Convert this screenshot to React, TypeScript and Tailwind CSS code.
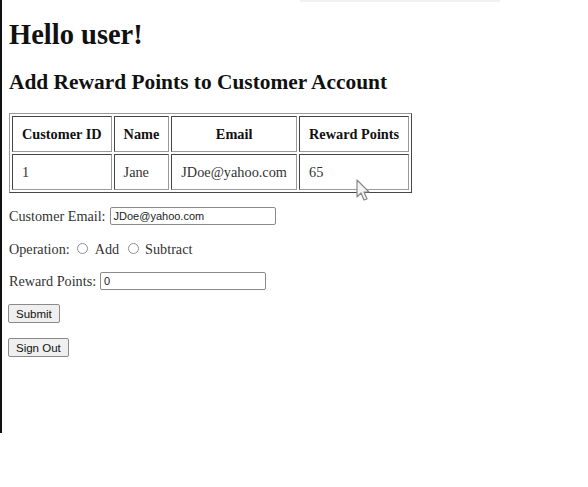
import React from "react";

const serif = { fontFamily: '"Liberation Serif", "Times New Roman", serif' };
const sans = { fontFamily: '"Liberation Sans", Arial, sans-serif' };

function Radio() {
  return <span className="inline-block w-[11px] h-[11px] rounded-full border border-[#8f8f8f] bg-white" />;
}

export default function App() {
  return (
    <div className="relative w-[588px] h-[487px] bg-white overflow-hidden text-[#1a1a1a]" style={serif}>
      <div className="absolute top-0 left-[300px] w-[200px] h-[2px] bg-[#f1f1f1]" />
      <div className="h-[433px] border-l-2 border-[#111] pl-[7px] pt-[19px]">
        <h1 className="text-[28.5px] leading-[32px] font-bold text-[#111]">Hello user!</h1>
        <h2 className="mt-[19px] text-[21.4px] leading-[24px] font-bold text-[#111]">Add Reward Points to Customer Account</h2>
        <table className="mt-[19px] border border-[#9a9a9a] [border-style:outset] [border-collapse:separate] [border-spacing:2px] text-[14.3px] leading-[16px]">
          <thead>
            <tr>
              <th className="border border-[#9a9a9a] [border-style:inset] px-[9px] py-[9px] font-bold text-[#111]">Customer ID</th>
              <th className="border border-[#9a9a9a] [border-style:inset] px-[9px] py-[9px] font-bold text-[#111]">Name</th>
              <th className="border border-[#9a9a9a] [border-style:inset] px-[9px] py-[9px] font-bold text-[#111]">Email</th>
              <th className="border border-[#9a9a9a] [border-style:inset] px-[9px] py-[9px] font-bold text-[#111]">Reward Points</th>
            </tr>
          </thead>
          <tbody>
            <tr>
              <td className="border border-[#9a9a9a] [border-style:inset] px-[9px] py-[9px] text-left text-[#333]">1</td>
              <td className="border border-[#9a9a9a] [border-style:inset] px-[9px] py-[9px] text-left text-[#333]">Jane</td>
              <td className="border border-[#9a9a9a] [border-style:inset] px-[9px] py-[9px] text-left text-[#333]">JDoe@yahoo.com</td>
              <td className="border border-[#9a9a9a] [border-style:inset] px-[9px] py-[9px] text-left text-[#333]">65</td>
            </tr>
          </tbody>
        </table>
        <div className="mt-[13px] flex flex-col text-[14.2px] leading-[16px] text-[#333]">
          <div className="flex items-center h-[19px]">
            <span>Customer Email:</span>
            <span className="ml-[4px] w-[166px] h-[18px] border border-[#8a8a8a] rounded-[2px] px-[3px] flex items-center text-[11px] text-[#222]" style={sans}>JDoe@yahoo.com</span>
          </div>
          <div className="flex items-center h-[19px] mt-[14px]">
            <span>Operation:</span>
            <span className="ml-[7px] flex items-center"><Radio /></span>
            <span className="ml-[7px]">Add</span>
            <span className="ml-[9px] flex items-center"><Radio /></span>
            <span className="ml-[6px]">Subtract</span>
          </div>
          <div className="flex items-center h-[19px] mt-[13px]">
            <span>Reward Points:</span>
            <span className="ml-[4px] w-[166px] h-[18px] border border-[#8a8a8a] rounded-[2px] px-[3px] flex items-center text-[11px] text-[#222]" style={sans}>0</span>
          </div>
          <div className="mt-[14px] flex -ml-[1px]">
            <span className="h-[19px] px-[7px] border border-[#8a8a8a] rounded-[2px] bg-[#efefef] flex items-center text-[11.5px] text-[#111]" style={sans}>Submit</span>
          </div>
          <div className="mt-[15px] flex -ml-[1px]">
            <span className="h-[19px] px-[7px] border border-[#8a8a8a] rounded-[2px] bg-[#efefef] flex items-center text-[11.5px] text-[#111]" style={sans}>Sign Out</span>
          </div>
        </div>
      </div>
      <svg className="absolute left-[356px] top-[179px]" width="18" height="26" viewBox="0 0 18 26" style={{ filter: "blur(0.6px)" }}>
        <path d="M1 1 L1 18 L5 14 L8 21 L11 20 L8 13 L13 13 Z" fill="#f4f4f4" stroke="#888" strokeWidth="1.2" strokeLinejoin="round" />
      </svg>
    </div>
  );
}
